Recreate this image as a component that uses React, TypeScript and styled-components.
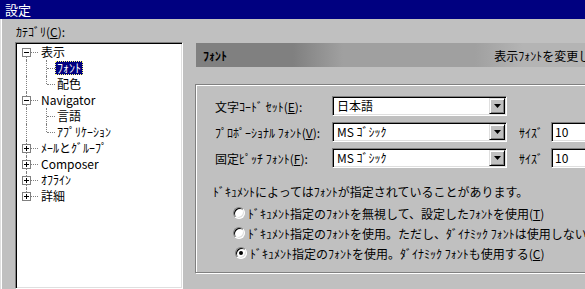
import * as React from 'react';
import styled, { createGlobalStyle } from 'styled-components';

const GlobalStyle = createGlobalStyle`
  html, body {
    margin: 0;
    padding: 0;
    width: 585px;
    height: 289px;
    overflow: hidden;
    background: #c0c0c0;
  }
  body {
    font-family: "Noto Sans CJK JP", "Noto Sans", sans-serif;
    font-size: 12px;
    color: #000;
  }
  u { text-decoration-thickness: 1px; text-underline-offset: 1px; }
`;

const Window = styled.div`
  width: 585px;
  height: 289px;
  display: flex;
  flex-direction: column;
  overflow: hidden;
  background: #c0c0c0;
`;

const TitleBar = styled.div`
  height: 19px;
  flex: none;
  background: #000080;
  color: #fff;
  font-size: 13px;
  line-height: 19px;
  padding-left: 5px;
`;

const Body = styled.div`
  flex: 1;
  display: flex;
  flex-direction: column;
  padding: 6px 0 0 15px;
  box-shadow: inset 1px 0 0 #dfdfdf, inset 2px 0 0 #fff;
  min-height: 0;
`;

const FieldLabel = styled.div`
  line-height: 14px;
  height: 14px;
  margin: 0 0 3px 1px;
`;

const Columns = styled.div`
  flex: 1;
  display: flex;
  gap: 12px;
  min-height: 0;
`;

/* ---- tree ---- */

const TreeBox = styled.div`
  width: 168px;
  flex: none;
  box-sizing: border-box;
  background: #fff;
  border: 1px solid;
  border-color: #808080 #fff #fff #808080;
  box-shadow: inset 1px 1px 0 #000, inset -1px -1px 0 #dfdfdf;
  padding: 1px 0 0 1px;
  display: flex;
  flex-direction: column;
`;

const TreeRow = styled.div`
  height: 16px;
  display: flex;
  align-items: center;
`;

type Line = 'full' | 'top' | 'bottom' | 'none';

const Guide = styled.span<{ $w: number; $v: Line; $h?: boolean }>`
  position: relative;
  width: ${p => p.$w}px;
  height: 16px;
  flex: none;
  &::before {
    content: '';
    position: absolute;
    left: 9px;
    top: ${p => (p.$v === 'bottom' ? '8px' : '0')};
    bottom: ${p => (p.$v === 'top' ? '8px' : '0')};
    border-left: 1px dotted #808080;
    display: ${p => (p.$v === 'none' ? 'none' : 'block')};
  }
  &::after {
    content: '';
    position: absolute;
    left: 10px;
    right: 0;
    top: 8px;
    border-top: 1px dotted #808080;
    display: ${p => (p.$h ? 'block' : 'none')};
  }
`;

const ExpanderBox = styled.svg`
  position: absolute;
  left: 5px;
  top: 4px;
  z-index: 1;
`;

const ItemLabel = styled.span<{ $selected?: boolean; $root?: boolean }>`
  height: 14px;
  line-height: 14px;
  padding: 0 2px;
  margin-left: ${p => (p.$root ? 1 : 0)}px;
  white-space: nowrap;
  box-sizing: border-box;
  background: ${p => (p.$selected ? '#000080' : 'transparent')};
  color: ${p => (p.$selected ? '#fff' : '#000')};
  outline: ${p => (p.$selected ? '1px dotted #ffff80' : 'none')};
  outline-offset: -1px;
`;

const Expander = ({ open }: { open: boolean }) => (
  <ExpanderBox width="9" height="9" viewBox="0 0 9 9">
    <rect x="0.5" y="0.5" width="8" height="8" fill="#fff" stroke="#808080" />
    <line x1="2" y1="4.5" x2="7" y2="4.5" stroke="#000" />
    {!open && <line x1="4.5" y1="2" x2="4.5" y2="7" stroke="#000" />}
  </ExpanderBox>
);

interface TreeItem {
  label: string;
  level: 0 | 1;
  expander?: 'open' | 'closed';
  selected?: boolean;
  line: Line;
}

const TREE: TreeItem[] = [
  { label: '表示', level: 0, expander: 'open', line: 'bottom' },
  { label: 'ﾌｫﾝﾄ', level: 1, selected: true, line: 'full' },
  { label: '配色', level: 1, line: 'top' },
  { label: 'Navigator', level: 0, expander: 'open', line: 'full' },
  { label: '言語', level: 1, line: 'full' },
  { label: 'ｱﾌﾟﾘｹｰｼｮﾝ', level: 1, line: 'top' },
  { label: 'ﾒｰﾙとｸﾞﾙｰﾌﾟ', level: 0, expander: 'closed', line: 'full' },
  { label: 'Composer', level: 0, expander: 'closed', line: 'full' },
  { label: 'ｵﾌﾗｲﾝ', level: 0, expander: 'closed', line: 'full' },
  { label: '詳細', level: 0, expander: 'closed', line: 'top' },
];

/* ---- right panel ---- */

const Panel = styled.div`
  width: 440px;
  flex: none;
  display: flex;
  flex-direction: column;
`;

const Header = styled.div`
  height: 24px;
  margin: 1px 0 0 1px;
  display: flex;
  align-items: center;
  justify-content: space-between;
  padding: 0 10px 0 7px;
  background: linear-gradient(
    90deg,
    #808080 0px,
    #808080 97px,
    #a0a0a0 147px,
    #a0a0a0 279px,
    #b4b4b4 327px,
    #b4b4b4 100%
  );
`;

const HeaderTitle = styled.span`
  font-weight: bold;
`;

const HeaderHint = styled.span`
  white-space: nowrap;
`;

const GroupBox = styled.div`
  margin-top: 17px;
  height: 189px;
  box-sizing: border-box;
  border: 1px solid #808080;
  box-shadow: 1px 1px 0 #fff, inset 1px 1px 0 #fff;
  padding: 11px 0 0 19px;
`;

const FormGrid = styled.div`
  display: grid;
  grid-template-columns: 117px 175px 44px 70px;
  grid-auto-rows: 20px;
  row-gap: 6px;
  align-items: center;
`;

const RowLabel = styled.span<{ $col?: number }>`
  white-space: nowrap;
  grid-column: ${p => p.$col ?? 1};
  padding-left: ${p => (p.$col === 3 ? 12 : 0)}px;
`;

const sunken = `
  box-sizing: border-box;
  background: #fff;
  border: 1px solid;
  border-color: #808080 #fff #fff #808080;
  box-shadow: inset 1px 1px 0 #000, inset -1px -1px 0 #dfdfdf;
`;

const Combo = styled.div`
  ${sunken}
  height: 20px;
  display: flex;
  align-items: center;
  padding: 1px 1px 1px 4px;
`;

const ComboText = styled.span`
  flex: 1;
  line-height: 16px;
  white-space: nowrap;
  overflow: hidden;
`;

const DropButton = styled.span`
  width: 16px;
  height: 16px;
  box-sizing: border-box;
  flex: none;
  background: #c0c0c0;
  border: 1px solid;
  border-color: #dfdfdf #000 #000 #dfdfdf;
  box-shadow: inset 1px 1px 0 #fff, inset -1px -1px 0 #808080;
  display: flex;
  align-items: center;
  justify-content: center;
`;

const SizeInput = styled.div`
  ${sunken}
  height: 20px;
  line-height: 16px;
  padding: 1px 3px;
`;

const Note = styled.div`
  margin: 17px 0 4px -2px;
  line-height: 14px;
  white-space: nowrap;
`;

const RadioList = styled.div`
  display: flex;
  flex-direction: column;
  padding-left: 18px;
`;

const RadioRow = styled.label<{ $focus?: boolean }>`
  height: 20px;
  display: flex;
  align-items: center;
  gap: 3px;
  white-space: nowrap;
  padding-left: ${p => (p.$focus ? 2 : 0)}px;
`;

const RadioCircle = styled.span<{ $checked?: boolean }>`
  width: 12px;
  height: 12px;
  box-sizing: border-box;
  flex: none;
  border-radius: 50%;
  border: 1px solid;
  border-color: #808080 #fff #fff #808080;
  background: #fff;
  box-shadow: inset 1px 1px 0 #000, inset -1px -1px 0 #dfdfdf;
  display: flex;
  align-items: center;
  justify-content: center;
  &::after {
    content: '';
    width: 4px;
    height: 4px;
    border-radius: 50%;
    background: ${p => (p.$checked ? '#000' : 'transparent')};
  }
`;

const ComboBox = ({ value }: { value: string }) => (
  <Combo>
    <ComboText>{value}</ComboText>
    <DropButton>
      <svg width="7" height="4" viewBox="0 0 7 4">
        <polygon points="0,0 7,0 3.5,4" fill="#000" />
      </svg>
    </DropButton>
  </Combo>
);

const RADIOS = [
  { text: <>ﾄﾞｷｭﾒﾝﾄ指定のﾌｫﾝﾄを無視して、設定したﾌｫﾝﾄを使用(<u>T</u>)</> },
  { text: <>ﾄﾞｷｭﾒﾝﾄ指定のﾌｫﾝﾄを使用。ただし、ﾀﾞｲﾅﾐｯｸ ﾌｫﾝﾄは使用しない</> },
  { text: <>ﾄﾞｷｭﾒﾝﾄ指定のﾌｫﾝﾄを使用。ﾀﾞｲﾅﾐｯｸ ﾌｫﾝﾄも使用する(<u>C</u>)</>, checked: true },
];

export default function App() {
  return (
    <>
      <GlobalStyle />
      <Window>
        <TitleBar>設定</TitleBar>
        <Body>
          <FieldLabel>ｶﾃｺﾞﾘ(<u>C</u>):</FieldLabel>
          <Columns>
            <TreeBox>
              {TREE.map((item, i) => (
                <TreeRow key={i}>
                  {item.level === 1 && <Guide $w={20} $v="full" />}
                  {item.level === 0 ? (
                    <Guide $w={21} $v={item.line} $h>
                      {item.expander && <Expander open={item.expander === 'open'} />}
                    </Guide>
                  ) : (
                    <Guide $w={18} $v={item.line} $h />
                  )}
                  <ItemLabel $selected={item.selected} $root={item.level === 0}>
                    {item.label}
                  </ItemLabel>
                </TreeRow>
              ))}
            </TreeBox>
            <Panel>
              <Header>
                <HeaderTitle>ﾌｫﾝﾄ</HeaderTitle>
                <HeaderHint>表示ﾌｫﾝﾄを変更します。</HeaderHint>
              </Header>
              <GroupBox>
                <FormGrid>
                  <RowLabel>文字ｺｰﾄﾞ ｾｯﾄ(<u>E</u>):</RowLabel>
                  <ComboBox value="日本語" />
                  <RowLabel>ﾌﾟﾛﾎﾟｰｼｮﾅﾙ ﾌｫﾝﾄ(<u>V</u>):</RowLabel>
                  <ComboBox value="MS ｺﾞｼｯｸ" />
                  <RowLabel $col={3}>ｻｲｽﾞ</RowLabel>
                  <SizeInput>10</SizeInput>
                  <RowLabel>固定ﾋﾟｯﾁ ﾌｫﾝﾄ(<u>F</u>):</RowLabel>
                  <ComboBox value="MS ｺﾞｼｯｸ" />
                  <RowLabel $col={3}>ｻｲｽﾞ</RowLabel>
                  <SizeInput>10</SizeInput>
                </FormGrid>
                <Note>ﾄﾞｷｭﾒﾝﾄによってはﾌｫﾝﾄが指定されていることがあります。</Note>
                <RadioList>
                  {RADIOS.map((r, i) => (
                    <RadioRow key={i} $focus={r.checked}>
                      <RadioCircle $checked={r.checked} />
                      <span>{r.text}</span>
                    </RadioRow>
                  ))}
                </RadioList>
              </GroupBox>
            </Panel>
          </Columns>
        </Body>
      </Window>
    </>
  );
}
